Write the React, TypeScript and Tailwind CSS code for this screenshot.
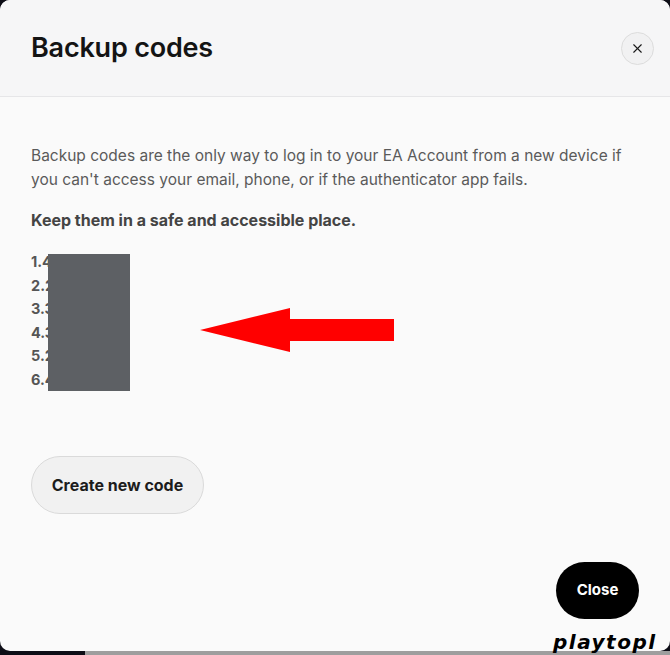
import { X } from 'lucide-react'

const codes = ['1.4', '2.2', '3.3', '4.3', '5.2', '6.4']

function Arrow() {
  return (
    <svg width="196" height="46" viewBox="0 0 196 46" className="ml-[70px] mt-[58px] shrink-0">
      <polygon points="0,22 90,0 90,11 194,11 194,33 90,33 90,44" fill="#ff0000" />
    </svg>
  )
}

export default function App() {
  return (
    <div className="relative h-[655px] w-[670px] overflow-hidden bg-[#0d0d16] font-['Inter','Noto_Sans',sans-serif]">
      <div className="flex h-[651px] w-full flex-col overflow-hidden rounded-[10px] bg-[#fafafa]">
        <header className="flex h-[97px] shrink-0 items-center justify-between border-b border-[#e6e6e8] bg-[#f6f6f7] pl-[31px] pr-[16px]">
          <h1 className="text-[27px] font-semibold tracking-[-0.2px] text-[#141414]">Backup codes</h1>
          <button className="flex h-[33px] w-[33px] items-center justify-center rounded-full border border-[#dcdcdc] bg-[#f1f1f2] text-[#1a1a1a]">
            <X size={15} strokeWidth={1.8} />
          </button>
        </header>

        <div className="flex flex-1 flex-col px-[31px] pt-[47px]">
          <p className="text-[15.5px] leading-[24px] text-[#5a5a5a]">
            Backup codes are the only way to log in to your EA Account from a new device if you can't access
            your email, phone, or if the authenticator app fails.
          </p>
          <p className="mt-[16px] text-[16px] font-bold text-[#444]">Keep them in a safe and accessible place.</p>

          <div className="mt-[18px] flex items-start">
            <div className="relative flex w-[99px] shrink-0 flex-col text-[14.5px] font-bold leading-[23.6px] text-[#555]">
              {codes.map((c) => (
                <span key={c}>{c}</span>
              ))}
              <div className="absolute left-[17px] top-[4px] h-[137px] w-[82px] bg-[#5d6064]" />
            </div>
            <Arrow />
          </div>

          <button className="mt-[64px] h-[58px] w-[173px] rounded-full border border-[#dadada] bg-[#f1f1f1] text-[16px] font-bold text-[#1c1c1c]">
            Create new code
          </button>

          <div className="mt-auto mb-[32px] flex justify-end">
            <button className="h-[57px] w-[83px] rounded-full bg-black text-[15px] font-bold text-white">
              Close
            </button>
          </div>
        </div>
      </div>
      <div className="flex h-[4px] w-full">
        <div className="w-[85px] bg-[#0d0d16]" />
        <div className="flex-1 bg-[#9e9e9e]" />
      </div>
      <div className="absolute bottom-[3px] left-[553px] whitespace-nowrap font-['DejaVu_Sans',sans-serif] text-[20px] font-black italic leading-none tracking-[1.5px] text-black">
        playtopl
      </div>
    </div>
  )
}
